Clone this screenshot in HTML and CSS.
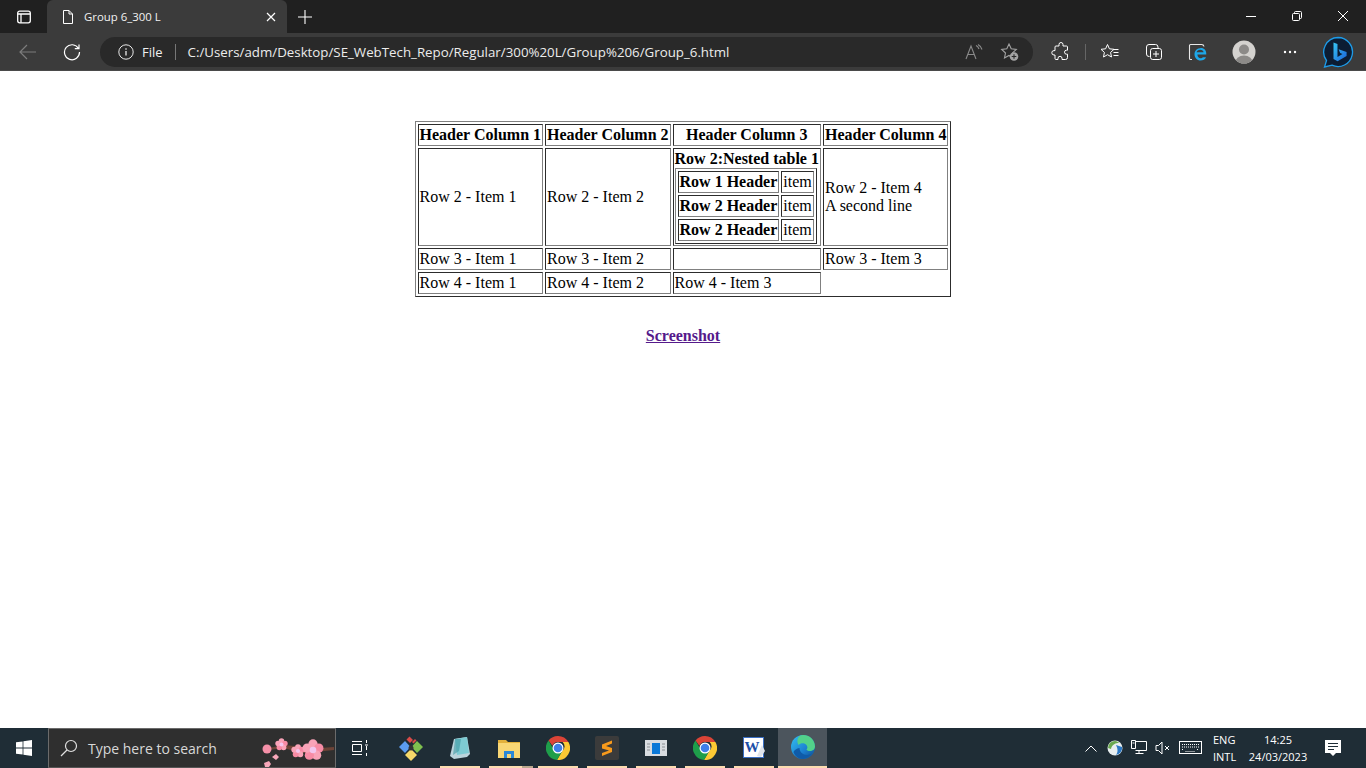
FILE: index.html
```html
<!doctype html>
<html lang="en">
<head>
    <meta charset="UTF-8">
    <title>Group 6_300 L</title>
    <link rel="stylesheet" href="styles.css">
</head>
<body>
<svg class="defs" width="0" height="0">
    <symbol id="chrome" viewBox="0 0 24 24">
        <path d="M12 0a12 12 0 0 1 10.4 6H12a6 6 0 0 0-5.6 3.8L2.5 4.6A12 12 0 0 1 12 0z" fill="#db4437"/>
        <path d="M22.4 6A12 12 0 0 1 11 24l5-8.6a6 6 0 0 0 .6-9.4z" fill="#fcc934"/>
        <path d="M2.5 4.6l5.2 9A6 6 0 0 0 16 15.400L11 24A12 12 0 0 1 2.500 4.600z" fill="#1e9e4a"/>
        <circle cx="12" cy="12" r="5.500" fill="#fff"/>
        <circle cx="12" cy="12" r="4.300" fill="#3f7fea"/>
    </symbol>
    <symbol id="flower" viewBox="0 0 20 20">
        <circle cx="10" cy="4.500" r="4.200" fill="#f9a3b8"/>
        <circle cx="15.300" cy="8.300" r="4.200" fill="#f78ba5"/>
        <circle cx="13.300" cy="14.700" r="4.200" fill="#f9a3b8"/>
        <circle cx="6.700" cy="14.700" r="4.200" fill="#f78ba5"/>
        <circle cx="4.700" cy="8.300" r="4.200" fill="#f9a3b8"/>
        <circle cx="10" cy="10" r="3" fill="#f3c6ee"/>
    </symbol>
</svg>

<div class="tabstrip">
    <div class="tab-side">
        <svg width="16" height="16" viewBox="0 0 16 16" fill="none" stroke="#fff" stroke-width="1.300"><rect x="1.700" y="2.200" width="12.600" height="11.600" rx="2"/><path d="M1.700 5h12.600M5 5v8.800" /></svg>
    </div>
    <div class="tab">
        <svg width="16" height="16" viewBox="0 0 16 16" fill="none" stroke="#fff" stroke-width="1"><path d="M3.500 1.500h5.500l3.500 3.500v9.500h-9zM9 1.500v3.500h3.500"/></svg>
        <span class="tab-title">Group 6_300 L</span>
        <svg class="tab-close" width="10" height="10" viewBox="0 0 10 10" stroke="#fff" stroke-width="1.200"><path d="M1 1l8 8M9 1l-8 8"/></svg>
    </div>
    <div class="newtab">
        <svg width="16" height="16" viewBox="0 0 16 16" stroke="#fff" stroke-width="1.100"><path d="M8 1v14M1 8h14"/></svg>
    </div>
    <div class="win-btns">
        <div class="win-btn"><svg width="10" height="10" viewBox="0 0 10 10" stroke="#fff"><path d="M0 5.500h10"/></svg></div>
        <div class="win-btn"><svg width="10" height="10" viewBox="0 0 10 10" fill="none" stroke="#fff"><rect x=".5" y="2.500" width="7" height="7" rx="1"/><path d="M2.500 2.500V1.500a1 1 0 0 1 1-1h5a1 1 0 0 1 1 1v5a1 1 0 0 1-1 1h-1"/></svg></div>
        <div class="win-btn"><svg width="10" height="10" viewBox="0 0 10 10" stroke="#fff"><path d="M0 0l10 10M10 0L0 10"/></svg></div>
    </div>
</div>

<div class="toolbar">
    <div class="tb-btn back">
        <svg width="18" height="16" viewBox="0 0 18 16" fill="none" stroke="#7d7d7d" stroke-width="1.200"><path d="M17 8H1M8 1L1 8l7 7"/></svg>
    </div>
    <div class="tb-btn reload">
        <svg width="18" height="18" viewBox="0 0 18 18" fill="none" stroke="#fff" stroke-width="1.200"><path d="M15.500 5.500A7.500 7.500 0 1 0 16.500 9M16 1.500v4.200h-4.200"/></svg>
    </div>
    <div class="address">
        <svg class="info" width="16" height="16" viewBox="0 0 16 16" fill="none" stroke="#e8e8e8"><circle cx="8" cy="8" r="7.200"/><path d="M8 7v4.500M8 4.300v1.400" stroke-width="1.300"/></svg>
        <span class="file">File</span>
        <span class="addr-sep"></span>
        <span class="url">C:/Users/adm/Desktop/SE_WebTech_Repo/Regular/300%20L/Group%206/Group_6.html</span>
        <svg class="read" width="18" height="16" viewBox="0 0 18 16" fill="none" stroke="#8a8a8a" stroke-width="1.100"><path d="M1 15L6 2l5 13M2.800 10.500h6.400M11 1.500a6 6 0 0 1 3 3.500M13 .5a8 8 0 0 1 4 5" /></svg>
        <svg class="star" width="20" height="20" viewBox="0 0 20 20"><path d="M9 2l2.200 4.800 5.100.6-3.800 3.500 1 5L9 13.400 4.500 16l1-5L1.700 7.400l5.100-.6z" fill="none" stroke="#a3a3a3" stroke-width="1.100"/><circle cx="14" cy="14.500" r="4.300" fill="#a3a3a3"/><path d="M14 12.200v4.600M11.700 14.500h4.600" stroke="#292929" stroke-width="1.100"/></svg>
    </div>
    <div class="tb-icons">
        <div class="tb-icon ext">
            <svg width="20" height="20" viewBox="0 0 20 20" fill="none" stroke="#fff" stroke-width="1"><path d="M8 2.500a2 2 0 0 1 4 0V4h3.500a1 1 0 0 1 1 1v3.200h-1a2 2 0 0 0 0 4h1v3.300a2 2 0 0 1-2 2H11v-1.200a2 2 0 0 0-4 0V17.500H5a1 1 0 0 1-1-1V13H3a2.200 2.200 0 0 1 0-4.400h1V5a1 1 0 0 1 1-1h3z"/></svg>
        </div>
        <span class="tb-sep"></span>
        <div class="tb-icon favs">
            <svg width="20" height="20" viewBox="0 0 20 20" fill="none" stroke="#fff" stroke-width="1"><path d="M7.500 2.500l1.900 4.300 4.600.5-3.400 3.100.9 4.600-4-2.300-4 2.300.9-4.600L1 7.300l4.600-.5zM13.500 7.500h5M13.500 10.500h5M13.500 13.500h5"/></svg>
        </div>
        <div class="tb-icon coll">
            <svg width="20" height="20" viewBox="0 0 20 20" fill="none" stroke="#fff" stroke-width="1"><path d="M5.500 14.500h-.500a2.500 2.500 0 0 1-2.500-2.500V5A2.500 2.500 0 0 1 5 2.500h6.500A2.500 2.500 0 0 1 14 5v1"/><rect x="6.500" y="6.500" width="11" height="11" rx="2.200"/><path d="M12 9v6M9 12h6"/></svg>
        </div>
        <div class="tb-icon ie">
            <svg width="20" height="20" viewBox="0 0 20 20" fill="none"><path d="M4 17.500H2.500a1 1 0 0 1-1-1v-13a1 1 0 0 1 1-1h11a2.500 2.500 0 0 1 2.500 2" stroke="#e8e8e8" stroke-width="1.100"/><path d="M6.500 12.500h11.800c.3-4-2-6.500-5.300-6.500-3.700 0-6.500 2.800-6.500 6.200 0 3.600 2.700 6.300 6 6.300 2.600 0 4.700-1.200 5.500-3.300h-3.200c-.5.800-1.300 1-2.200 1-1.700 0-3-1.200-3.200-3.700zm2.100-2.300c.3-1.500 1.700-2.400 3.600-2.400s3.200 1 3.400 2.400z" fill="#1ea7e8"/></svg>
        </div>
        <div class="tb-icon profile">
            <svg width="24" height="24" viewBox="0 0 24 24"><defs><clipPath id="pc"><circle cx="12" cy="12" r="11.500"/></clipPath></defs><circle cx="12" cy="12" r="11.500" fill="#d4d2cf"/><g clip-path="url(#pc)" fill="#8c8a88"><circle cx="12" cy="9.500" r="5"/><ellipse cx="12" cy="23" rx="9" ry="7.500"/></g></svg>
        </div>
        <div class="tb-icon dots">
            <svg width="14" height="4" viewBox="0 0 14 4" fill="#fff"><circle cx="2" cy="2" r="1.200"/><circle cx="7" cy="2" r="1.200"/><circle cx="12" cy="2" r="1.200"/></svg>
        </div>
        <div class="tb-icon bing">
            <svg width="32" height="32" viewBox="0 0 32 32"><defs><linearGradient id="bg" x1="0" y1="0" x2="1" y2="1"><stop offset="0" stop-color="#37c6f4"/><stop offset="1" stop-color="#1a62d8"/></linearGradient></defs><path d="M16 1.500a14.500 14.500 0 1 1-6 27.700L2.500 31l2-6.500A14.500 14.500 0 0 1 16 1.500z" fill="#0c1d33" stroke="#1d9be8" stroke-width="1.300"/><path d="M11.500 6.500l4 1.400v13l5-2.800-2.400-1.100-1.500-3.700 8 2.800v4l-9 5.200-4.100-2.300z" fill="url(#bg)"/></svg>
        </div>
    </div>
</div>

<main class="page">
    <table class="grid">
        <tr>
            <th>Header Column 1</th>
            <th>Header Column 2</th>
            <th>Header Column 3</th>
            <th>Header Column 4</th>
        </tr>
        <tr>
            <td>Row 2 - Item 1</td>
            <td>Row 2 - Item 2</td>
            <td>
                <b>Row 2:Nested table 1</b>
                <table class="grid">
                    <tr><th>Row 1 Header</th><td>item</td></tr>
                    <tr><th>Row 2 Header</th><td>item</td></tr>
                    <tr><th>Row 2 Header</th><td>item</td></tr>
                </table>
            </td>
            <td>Row 2 - Item 4<br>A second line</td>
        </tr>
        <tr>
            <td>Row 3 - Item 1</td>
            <td>Row 3 - Item 2</td>
            <td></td>
            <td>Row 3 - Item 3</td>
        </tr>
        <tr>
            <td>Row 4 - Item 1</td>
            <td>Row 4 - Item 2</td>
            <td>Row 4 - Item 3</td>
        </tr>
    </table>
    <a class="shot" href="#">Screenshot</a>
</main>

<div class="taskbar">
    <div class="start">
        <svg width="16" height="16" viewBox="0 0 16 16" fill="#fff"><path d="M0 2.300l6.600-.9v6.200H0zM7.400 1.300L16 0v7.600H7.400zM0 8.400h6.600v6.200L0 13.700zM7.400 8.400H16V16l-8.600-1.300z"/></svg>
    </div>
    <div class="search">
        <svg width="18" height="18" viewBox="0 0 18 18" fill="none" stroke="#e0e0e0" stroke-width="1.200"><circle cx="11" cy="7" r="5.500"/><path d="M7 11l-6 6"/></svg>
        <span class="search-text">Type here to search</span>
        <svg class="blossom" width="74" height="38" viewBox="0 0 74 38">
            <path d="M8 19l14-3 12 1 10 3 29-2v3l-29 3-10-2-12-3-14 2z" fill="#6d4337"/>
            <circle cx="6" cy="20" r="4.500" fill="#f590a8"/>
            <use href="#flower" x="14" y="9" width="13" height="13"/>
            <use href="#flower" x="30" y="15" width="14" height="14"/>
            <use href="#flower" x="41" y="10" width="22" height="22"/>
            <path d="M11 28l4-3 3 3-3 3zM3 34l5-2 2 3-2 3H4z" fill="#f7a7ba"/>
        </svg>
    </div>
    <div class="task taskview">
        <svg width="16" height="16" viewBox="0 0 16 16" fill="none" stroke="#fff"><path d="M0 1.500h10M0 14.500h10M.5 4.500h9v7h-9zM14.500 0v3M14.500 6v4M14.500 13v3M13 5h3" /></svg>
    </div>
    <div class="task first">
        <svg width="26" height="26" viewBox="0 0 26 26"><path d="M7 6l5.500 6-5.500 6-6-6z" fill="#5b9bf0"/><path d="M19 6l6 6-6 6-5.500-6z" fill="#7fc04f"/><path d="M13 14l6 6-6 6-6-6z" fill="#f7d96a"/><path d="M8.500 4.500l3-3 3.500 3.500-3 3z" fill="#d94b48"/><path d="M14 7l3-3 1.500 1.500-3 3z" fill="#d94b48"/><circle cx="13" cy="13" r="2.500" fill="#333"/></svg>
    </div>
    <div class="task run">
        <svg width="24" height="24" viewBox="0 0 24 24"><path d="M6 3l13-2 3 17-3 3-13 2-4-3z" fill="#bcd4dc"/><path d="M7 3l12-2 2 16-12 2z" fill="#7ecbd3"/><path d="M7 3l6 0-2 12-6 4z" fill="#3f9aa3" opacity=".6"/></svg>
    </div>
    <div class="task run stack">
        <svg width="22" height="20" viewBox="0 0 22 20"><path d="M0 2h8l2 2h12v16H0z" fill="#e2b13c"/><path d="M0 5h22v15H0z" fill="#f8d775"/><path d="M6 13h10v7H6z" fill="#2b88d8"/><path d="M9 16h4v4H9z" fill="#f8d775"/></svg>
    </div>
    <div class="task run"><svg width="24" height="24"><use href="#chrome"/></svg></div>
    <div class="task run">
        <svg width="24" height="24" viewBox="0 0 24 24"><rect width="24" height="24" rx="2" fill="#3b3b3b"/><path d="M17 4.500L7 8.500v4l7 2-7 2.500v3l10-4v-4l-6-2 6-2.500z" fill="#f89a1c"/></svg>
    </div>
    <div class="task run">
        <svg width="22" height="16" viewBox="0 0 22 16"><rect width="22" height="16" fill="#d8dce0"/><rect x="7" y="3" width="8" height="11" fill="#0a78d7"/><path d="M2 4h3M2 7h3M2 10h3M17 4h3M17 7h3M17 10h3" stroke="#8a8f94"/></svg>
    </div>
    <div class="task run"><svg width="24" height="24"><use href="#chrome"/></svg></div>
    <div class="task run">
        <svg width="22" height="22" viewBox="0 0 22 22"><rect x=".5" y=".5" width="20" height="20" fill="#fff" stroke="#3a6fc4"/><text x="1.500" y="15" class="word-w">W</text><path d="M19 8l3 6-4 6-4-1z" fill="#dfe4ea"/></svg>
    </div>
    <div class="task edge">
        <svg width="24" height="24" viewBox="0 0 24 24"><defs><linearGradient id="eg" x1="0" y1="0" x2="1" y2="1"><stop offset="0" stop-color="#35c1f1"/><stop offset=".6" stop-color="#1b7fd0"/><stop offset="1" stop-color="#114a8b"/></linearGradient></defs><circle cx="12" cy="12" r="12" fill="url(#eg)"/><path d="M12 0c6.500 0 12 4.800 12 11.500 0 3-2.500 4.500-5 4.500-2 0-3.500-.7-3.500-1.500 1-1 1.500-3-.5-5-2-1.700-5.500-1.700-7.500.5C4.700 5 7.500 0 12 0z" fill="#52d18a"/><path d="M8.500 13c0 4 3.500 7 7.500 7 1.500 0 3.500-.5 5-1.700-2.500 4-6 5.700-9 5.700-5 0-8.500-3.500-9.500-7 1-2 3-3.500 6-4z" fill="#0f5ba8"/></svg>
    </div>
    <div class="tray">
        <svg class="tray-chev" width="12" height="7" viewBox="0 0 12 7" fill="none" stroke="#fff"><path d="M.5 6.500L6 1l5.500 5.500"/></svg>
        <svg class="tray-globe" width="16" height="16" viewBox="0 0 16 16"><circle cx="8" cy="8" r="7.500" fill="#e8eef0"/><path d="M1 8a7 7 0 0 1 7-7c2 0 3.500 1 4 2C9 3 5 4 4 9z" fill="#6aa84f"/><path d="M9 5l6 2a7 7 0 0 1-6 8c2-3 2-6 0-10z" fill="#2b78c4"/></svg>
        <svg class="tray-net" width="16" height="16" viewBox="0 0 16 16" fill="none" stroke="#fff"><path d="M4.500 1.500h11v9h-11M8 10.500v3M4.500 13.500h8M.5.500h4v8h-4zM1.500 3h2"/></svg>
        <svg class="tray-vol" width="16" height="16" viewBox="0 0 16 16" fill="none" stroke="#fff"><path d="M1 5.500h2.500L7 2v12l-3.500-3.500H1zM10 6l4 4M14 6l-4 4"/></svg>
        <svg class="tray-kbd" width="24" height="14" viewBox="0 0 24 14" fill="none" stroke="#fff"><rect x=".5" y=".5" width="22" height="12"/><path d="M3 3.500h17M3 6h17M3 8.500h2M6.500 10.500h10M18 8.500h2" stroke-dasharray="1 1"/></svg>
        <div class="tray-lang"><span>ENG</span><span>INTL</span></div>
        <div class="tray-clock"><span>14:25</span><span>24/03/2023</span></div>
        <div class="tray-note">
            <svg width="16" height="16" viewBox="0 0 16 16"><path d="M0 0h16v13h-5l-3 3-3-3H0z" fill="#fff"/><path d="M3 3.500h10M3 6.500h10M3 9.500h6" stroke="#1f2d36"/></svg>
        </div>
    </div>
</div>
</body>
</html>
```

FILE: styles.css
```css
*{
    box-sizing: border-box;
}

html,body{
    height: 100%;
}

body{
    margin: 0;
    overflow: hidden;
    display: flex;
    flex-direction: column;
    background-color: #fff;
    font-family: "Open Sans","Noto Sans",sans-serif;
}

.defs{
    position: absolute;
}

svg{
    display: block;
    flex: none;
}

/* browser tabs */
.tabstrip{
    display: flex;
    align-items: flex-end;
    height: 33px;
    background-color: #202020;
}
.tab-side{
    display: flex;
    align-items: center;
    justify-content: center;
    width: 47px;
    height: 33px;
}
.tab{
    display: flex;
    align-items: center;
    width: 240px;
    height: 33px;
    padding: 0 11px 0 13px;
    background-color: #3b3b3b;
    border-radius: 6px 6px 0 0;
}
.tab-title{
    flex: 1;
    margin-left: 8px;
    font-size: 11.400px;
    color: #f2f2f2;
}
.newtab{
    display: flex;
    align-items: center;
    justify-content: center;
    width: 36px;
    height: 33px;
}
.win-btns{
    display: flex;
    margin-left: auto;
    align-self: flex-start;
}
.win-btn{
    display: flex;
    align-items: center;
    justify-content: center;
    width: 46px;
    height: 32px;
}

/* toolbar */
.toolbar{
    display: flex;
    align-items: center;
    height: 38px;
    padding-left: 6px;
    background-color: #3b3b3b;
    border-bottom: 1px solid #4a4a4a;
}
.tb-btn{
    display: flex;
    flex: none;
    align-items: center;
    justify-content: center;
    width: 44px;
    height: 30px;
}
.address{
    display: flex;
    flex: none;
    align-items: center;
    width: 933px;
    height: 30px;
    margin-left: 6px;
    padding: 0 13px 0 18px;
    background-color: #292929;
    border-radius: 15px;
}
.file{
    margin-left: 8px;
    font-size: 13px;
    color: #f0f0f0;
}
.addr-sep{
    width: 1px;
    height: 16px;
    margin: 0 12px;
    background-color: #777;
}
.url{
    flex: 1;
    font-size: 13.300px;
    color: #ececec;
}
.read{
    margin-right: 17px;
}
.tb-icons{
    display: flex;
    flex: none;
    align-items: center;
    height: 30px;
}
.tb-icon{
    display: flex;
    flex: none;
    align-items: center;
    justify-content: center;
    width: 44px;
    height: 30px;
}
.ext{
    margin-left: 6px;
}
.tb-sep{
    width: 1px;
    height: 16px;
    margin: 0 2px;
    background-color: #666;
}
.profile,
.dots{
    margin-left: 2px;
}
.bing{
    width: 52px;
}

/* page content */
.page{
    flex: 1;
    display: flex;
    flex-direction: column;
    align-items: center;
    padding-top: 50px;
    font-family: "Liberation Serif",serif;
    font-size: 16px;
    color: #000;
}
.grid{
    border: 1px outset #808080;
    border-spacing: 2px;
    border-collapse: separate;
}
.grid th,
.grid td{
    border: 1px inset #808080;
    padding: 1px;
}
.shot{
    margin-top: 30px;
    font-weight: bold;
    color: #551a8b;
}

/* windows taskbar */
.taskbar{
    display: flex;
    height: 40px;
    background-color: #1f2d36;
}
.start{
    display: flex;
    flex: none;
    align-items: center;
    justify-content: center;
    width: 48px;
}
.search{
    display: flex;
    flex: none;
    align-items: center;
    width: 288px;
    padding-left: 11px;
    background-color: #2f2f2f;
    border: 1px solid #6b6b6b;
    border-bottom-color: #555;
}
.search-text{
    flex: 1;
    margin-left: 10px;
    font-size: 14px;
    color: #d8d8d8;
}
.task{
    display: flex;
    flex: none;
    align-items: center;
    justify-content: center;
    width: 49px;
    height: 40px;
}
.taskview{
    width: 48px;
}
.first{
    margin-left: 2px;
}
.run{
    position: relative;
}
.run::after{
    content: "";
    position: absolute;
    left: 5px;
    right: 4px;
    bottom: 0;
    height: 2px;
    background-color: #fbdcb0;
}
.stack::after{
    right: 0;
    background-image: linear-gradient(to right,#fbdcb0 75%,#b9a78d 75%);
    background-color: transparent;
}
.word-w{
    font-family: "Liberation Serif",serif;
    font-size: 15px;
    font-weight: bold;
    fill: #1d4fa8;
}
.edge{
    background-color: #4c555d;
    border-bottom: 2px solid #fbdcb0;
}
.tray{
    flex: 1;
    display: flex;
    align-items: center;
    justify-content: flex-end;
    padding-right: 13px;
    color: #fff;
    font-size: 11px;
}
.tray-globe{
    margin-left: 10px;
}
.tray-net{
    margin-left: 8px;
}
.tray-vol{
    margin-left: 8px;
}
.tray-kbd{
    margin-left: 8px;
}
.tray-lang{
    display: flex;
    flex-direction: column;
    width: 30px;
    margin-left: 10px;
    line-height: 17px;
}
.tray-clock{
    display: flex;
    flex-direction: column;
    align-items: center;
    width: 70px;
    line-height: 17px;
}
.tray-note{
    display: flex;
    justify-content: center;
    width: 40px;
}
```
